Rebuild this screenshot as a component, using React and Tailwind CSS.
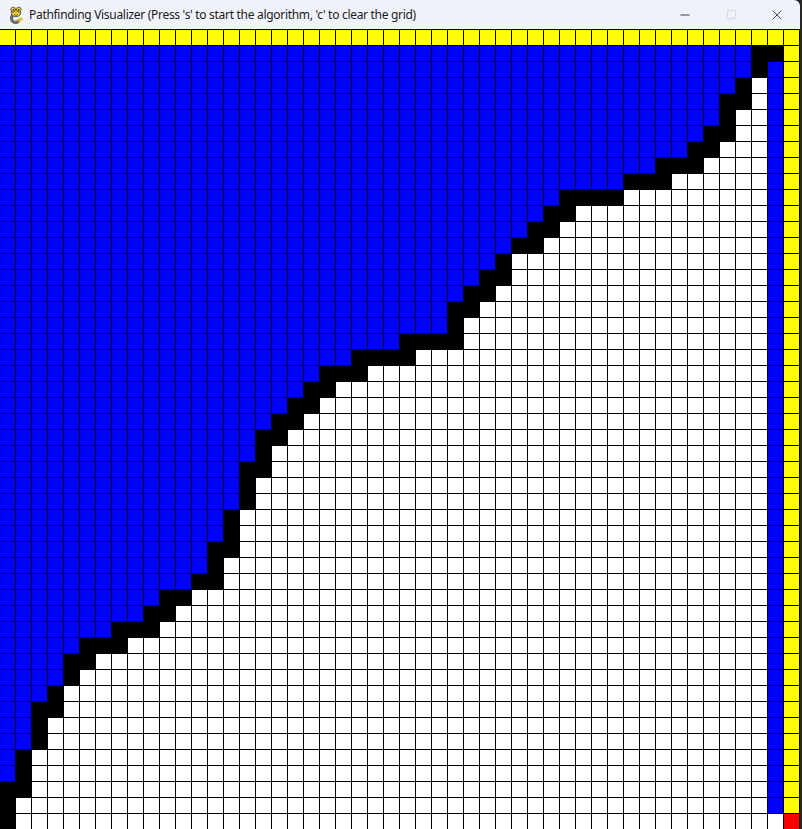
import { Minus, Square, X } from "lucide-react";

// black band per row (rows 1..49): [first black col, last black col]
const PATH = [
  [47, 47], [47, 47], [46, 46], [45, 46], [45, 45], [44, 45], [43, 44], [41, 43], [39, 41],
  [35, 38], [34, 35], [33, 34], [32, 33], [31, 31], [30, 31], [29, 30], [28, 29], [28, 28],
  [25, 28], [22, 25], [20, 22], [19, 20], [18, 19], [17, 18], [16, 17], [16, 16], [15, 16],
  [15, 15], [15, 15], [14, 14], [14, 14], [13, 14], [13, 13], [12, 13], [10, 11], [9, 10],
  [7, 9], [5, 7], [4, 5], [4, 4], [3, 3], [2, 3], [2, 2], [2, 2], [1, 1], [1, 1],
  [0, 1], [0, 0], [0, 0],
];

const COLORS = {
  blue: "bg-[#0000ff]",
  yellow: "bg-[#ffff00]",
  black: "bg-black",
  white: "bg-white",
  red: "bg-[#ff0000]",
};

const cellColor = (r, c) => {
  if (r === 0) return "yellow";
  if (c === 49) return r === 49 ? "red" : "yellow";
  if (c === 48) return r === 1 ? "black" : r === 49 ? "white" : "blue";
  const [s, e] = PATH[r - 1];
  if (c < s) return "blue";
  if (c <= e) return "black";
  return "white";
};

const cells = [];
for (let r = 0; r < 50; r++) {
  for (let c = 0; c < 50; c++) cells.push({ key: `${r}-${c}`, color: cellColor(r, c) });
}

const PygameIcon = () => (
  <svg width="16" height="18" viewBox="0 0 16 18">
    <path d="M5 9 C3 11 3 14 5 15.5 C7 17 10 16.5 11 14.5" fill="none" stroke="#6b6b6b" strokeWidth="3.2" strokeLinecap="round" />
    <path d="M11 14.5 C12 13 13 12.5 14 13" fill="none" stroke="#e8c21a" strokeWidth="2.4" strokeLinecap="round" />
    <ellipse cx="8" cy="7" rx="4.5" ry="3.5" fill="#f2cf2a" stroke="#3a3a3a" strokeWidth="0.8" />
    <circle cx="5.2" cy="3.6" r="2.4" fill="#f7d83a" stroke="#3a3a3a" strokeWidth="0.8" />
    <circle cx="10.8" cy="3.6" r="2.4" fill="#f7d83a" stroke="#3a3a3a" strokeWidth="0.8" />
    <circle cx="5.4" cy="3.8" r="0.9" fill="#222" />
    <circle cx="10.6" cy="3.8" r="0.9" fill="#222" />
    <path d="M6 8.6 Q8 9.8 10 8.6" fill="none" stroke="#3a3a3a" strokeWidth="0.7" />
  </svg>
);

export default function App() {
  return (
    <div className="w-[802px] h-[829px] bg-[#262626] overflow-hidden flex">
      <div className="w-[800px] flex flex-col">
        <div className="h-[29px] bg-[#eff2f8] flex items-center pl-2 pr-0 rounded-tr-[6px]">
          <PygameIcon />
          <span className="ml-[5px] text-[12px] tracking-[-0.3px] text-[#1b1b1b] font-['Noto_Sans',sans-serif] whitespace-nowrap">
            Pathfinding Visualizer (Press 's' to start the algorithm, 'c' to clear the grid)
          </span>
          <div className="ml-auto flex items-center h-full">
            <div className="w-[46px] h-full flex items-center justify-center">
              <Minus size={14} strokeWidth={1.4} className="text-[#1b1b1b]" />
            </div>
            <div className="w-[46px] h-full flex items-center justify-center">
              <Square size={11} strokeWidth={1.2} className="text-[#c2c2c2]" />
            </div>
            <div className="w-[46px] h-full flex items-center justify-center">
              <X size={16} strokeWidth={1.2} className="text-[#1b1b1b]" />
            </div>
          </div>
        </div>
        <div className="grid grid-cols-[repeat(50,15px)] auto-rows-[15px] gap-px bg-black pt-px pr-px w-fit">
          {cells.map((cell) => (
            <div key={cell.key} className={COLORS[cell.color]} />
          ))}
        </div>
      </div>
    </div>
  );
}
